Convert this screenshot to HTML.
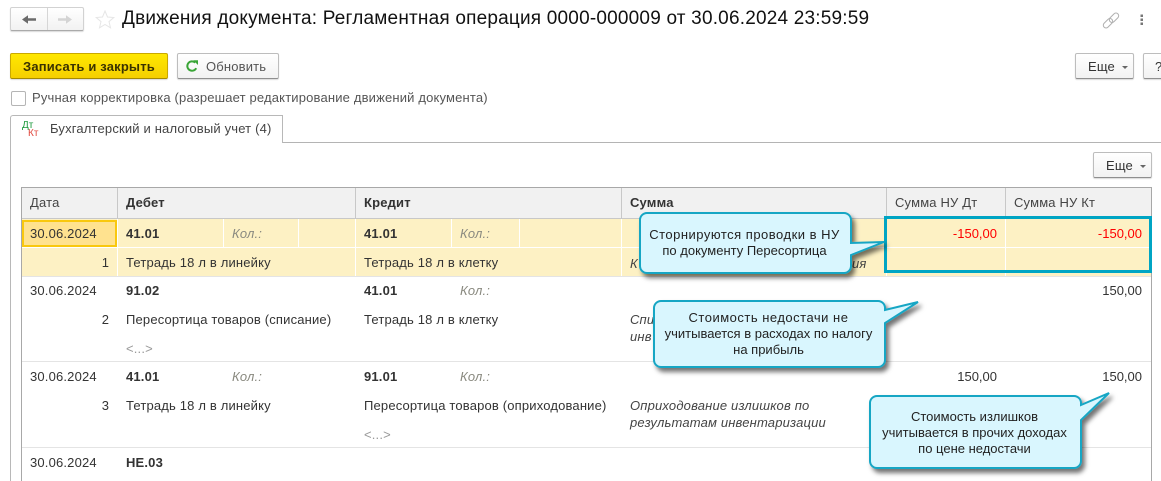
<!DOCTYPE html>
<html lang="ru"><head><meta charset="utf-8"><title>Движения документа</title>
<style>
html,body{margin:0;padding:0;background:#fff;width:1161px;height:481px;overflow:hidden}
body{position:relative;font:13px/14px "Liberation Sans",Arial,sans-serif;letter-spacing:.17px;color:#333}
.a{position:absolute}
.t{position:absolute;white-space:nowrap;line-height:14px}
.b{font-weight:bold}
.k{font-style:italic;color:#8a8a80}
.i{font-style:italic;color:#444}
.r{text-align:right;letter-spacing:0}
.btn{position:absolute;box-sizing:border-box;border:1px solid #bdbdbd;border-bottom-color:#8f8f8f;border-radius:2px;background:linear-gradient(#fff,#f2f2f2);box-shadow:0 1px 1px rgba(0,0,0,.15)}
.c{position:absolute;text-align:center;color:#222;line-height:16px;white-space:nowrap;letter-spacing:0}
</style></head><body>

<!-- nav -->
<div class="btn" style="left:10px;top:7px;width:74px;height:24px;border-color:#d2d2d2;border-bottom-color:#aaa"></div>
<div class="a" style="left:47px;top:8px;width:1px;height:22px;background:#d6d6d6"></div>
<svg class="a" style="left:0;top:0" width="125" height="35">
<path d="M22 19.500l6-4.200v2.900h8v2.600h-8v2.900z" fill="#6b6b6b"/>
<path d="M72 19.500l-6-4.200v2.900h-8v2.600h8v2.900z" fill="#d4d4d4"/>
<path d="M105 11l2.500 6 6.300.5-4.800 4.100 1.500 6.200-5.500-3.300-5.500 3.300 1.500-6.200-4.800-4.100 6.300-.5z" fill="#fff" stroke="#e6e6e6" stroke-width="1"/>
</svg>
<div class="t" style="left:122px;top:8px;font-size:19px;line-height:21px;color:#111;letter-spacing:.2px">Движения документа: Регламентная операция 0000-000009 от 30.06.2024 23:59:59</div>

<!-- top right icons -->
<svg class="a" style="left:1090px;top:5px" width="60" height="30">
<rect x="18.500" y="10" width="11" height="5.500" rx="2.750" transform="rotate(-45 24 12.750)" fill="none" stroke="#b0b0b0" stroke-width="1"/>
<rect x="12.500" y="15.500" width="11" height="5.500" rx="2.750" transform="rotate(-45 18 18.250)" fill="none" stroke="#b0b0b0" stroke-width="1"/>
<rect x="50.500" y="9.500" width="2.500" height="2.500" fill="#777"/><rect x="50.500" y="13.500" width="2.500" height="2.500" fill="#777"/><rect x="50.500" y="17.500" width="2.500" height="2.500" fill="#777"/>
</svg>

<!-- buttons -->
<div class="btn" style="left:10px;top:53px;width:158px;height:26px;background:linear-gradient(#ffe800,#f5cf00);border-color:#c9a800;border-bottom-color:#a58a00"></div>
<div class="t b" style="left:23px;top:60px;color:#3a3200">Записать и закрыть</div>
<div class="btn" style="left:177px;top:53px;width:102px;height:26px"></div>
<svg class="a" style="left:185px;top:59px" width="15" height="15"><path d="M11.200 9.200A4.700 4.700 0 1 1 10.200 3.600" fill="none" stroke="#3aa537" stroke-width="2"/><path d="M8.200 1.200h4.800v4.800z" fill="#3aa537"/></svg>
<div class="t" style="left:206px;top:60px;color:#555">Обновить</div>

<div class="btn" style="left:1075px;top:53px;width:59px;height:26px"></div>
<div class="t" style="left:1088px;top:60px">Еще</div>
<div class="a" style="left:1122px;top:66px;border:3px solid transparent;border-top-color:#666;border-bottom:0"></div>
<div class="btn" style="left:1143px;top:53px;width:30px;height:26px"></div>
<div class="t" style="left:1155px;top:60px">?</div>

<div class="a" style="left:11px;top:91px;width:13px;height:13px;border:1px solid #b5b5b5;border-radius:2px"></div>
<div class="t" style="left:32px;top:91px;color:#555">Ручная корректировка (разрешает редактирование движений документа)</div>

<!-- tab -->
<div class="a" style="left:283px;top:142px;width:878px;height:1px;background:#b4b4b4"></div>
<div class="a" style="left:10px;top:115px;width:272px;height:366px;border:1px solid #b8b8b8;border-width:1px 0 0 1px;border-radius:3px 0 0 0"></div>
<div class="a" style="left:282px;top:116px;width:1px;height:27px;background:#b8b8b8"></div>
<div class="t" style="left:22px;top:121px;font-size:10px;line-height:10px;color:#1c9a3c;letter-spacing:0">Дт</div>
<div class="t" style="left:28px;top:129px;font-size:10px;line-height:10px;color:#e0483e;letter-spacing:0">Кт</div>
<div class="t" style="left:50px;top:122px;color:#444">Бухгалтерский и налоговый учет (4)</div>

<div class="btn" style="left:1093px;top:152px;width:59px;height:26px"></div>
<div class="t" style="left:1106px;top:159px">Еще</div>
<div class="a" style="left:1140px;top:165px;border:3px solid transparent;border-top-color:#666;border-bottom:0"></div>

<!-- table frame -->
<div class="a" style="left:21px;top:187px;width:1131px;height:1px;background:#a8a8a8"></div>
<div class="a" style="left:21px;top:187px;width:1px;height:294px;background:#a8a8a8"></div>
<div class="a" style="left:1151px;top:187px;width:1px;height:294px;background:#a8a8a8"></div>
<div class="a" style="left:22px;top:188px;width:1129px;height:30px;background:#f1f1f1"></div>
<div class="a" style="left:22px;top:218px;width:1129px;height:1px;background:#c8c8c8"></div>
<div class="a" style="left:117px;top:188px;width:1px;height:30px;background:#c8c8c8"></div>
<div class="a" style="left:355px;top:188px;width:1px;height:30px;background:#c8c8c8"></div>
<div class="a" style="left:621px;top:188px;width:1px;height:30px;background:#c8c8c8"></div>
<div class="a" style="left:886px;top:188px;width:1px;height:30px;background:#c8c8c8"></div>
<div class="a" style="left:1005px;top:188px;width:1px;height:30px;background:#c8c8c8"></div>

<div class="t" style="left:30px;top:196px;color:#444">Дата</div>
<div class="t b" style="left:126px;top:196px">Дебет</div>
<div class="t b" style="left:364px;top:196px">Кредит</div>
<div class="t b" style="left:630px;top:196px">Сумма</div>
<div class="t" style="left:895px;top:196px;color:#444">Сумма НУ Дт</div>
<div class="t" style="left:1014px;top:196px;color:#444">Сумма НУ Кт</div>

<!-- row 1 bg -->
<div class="a" style="left:22px;top:219px;width:1129px;height:57px;background:#fdf1c4"></div>
<div class="a" style="left:22px;top:247px;width:1129px;height:1px;background:#fff"></div>
<div class="a" style="left:117px;top:219px;width:1px;height:57px;background:#fff"></div>
<div class="a" style="left:355px;top:219px;width:1px;height:57px;background:#fff"></div>
<div class="a" style="left:621px;top:219px;width:1px;height:57px;background:#fff"></div>
<div class="a" style="left:886px;top:219px;width:1px;height:57px;background:#fff"></div>
<div class="a" style="left:1005px;top:219px;width:1px;height:57px;background:#fff"></div>
<div class="a" style="left:223px;top:219px;width:1px;height:28px;background:#fff"></div>
<div class="a" style="left:298px;top:219px;width:1px;height:28px;background:#fff"></div>
<div class="a" style="left:451px;top:219px;width:1px;height:28px;background:#fff"></div>
<div class="a" style="left:519px;top:219px;width:1px;height:28px;background:#fff"></div>
<div class="a" style="left:22px;top:220px;width:91px;height:23px;background:#ffe28f;border:2px solid #f9c80e"></div>
<div class="a" style="left:22px;top:276px;width:1129px;height:1px;background:#e4e4e4"></div>
<div class="a" style="left:22px;top:361px;width:1129px;height:1px;background:#e4e4e4"></div>
<div class="a" style="left:22px;top:447px;width:1129px;height:1px;background:#e4e4e4"></div>

<!-- row 1 -->
<div class="t" style="left:30px;top:227px">30.06.2024</div>
<div class="t b" style="left:126px;top:227px">41.01</div>
<div class="t k" style="left:232px;top:227px">Кол.:</div>
<div class="t b" style="left:364px;top:227px">41.01</div>
<div class="t k" style="left:460px;top:227px">Кол.:</div>
<div class="t r" style="left:897px;width:100px;top:227px;color:#f00">-150,00</div>
<div class="t r" style="left:1042px;width:100px;top:227px;color:#f00">-150,00</div>
<div class="t r" style="left:60px;width:49px;top:256px">1</div>
<div class="t" style="left:126px;top:256px">Тетрадь 18 л в линейку</div>
<div class="t" style="left:364px;top:256px">Тетрадь 18 л в клетку</div>
<div class="t i" style="left:630px;top:257px">К</div>
<div class="t i" style="left:852px;top:257px">ия</div>

<!-- row 2 -->
<div class="t" style="left:30px;top:284px">30.06.2024</div>
<div class="t b" style="left:126px;top:284px">91.02</div>
<div class="t b" style="left:364px;top:284px">41.01</div>
<div class="t k" style="left:460px;top:284px">Кол.:</div>
<div class="t r" style="left:1042px;width:100px;top:284px">150,00</div>
<div class="t r" style="left:60px;width:49px;top:313px">2</div>
<div class="t" style="left:126px;top:313px">Пересортица товаров (списание)</div>
<div class="t" style="left:364px;top:313px">Тетрадь 18 л в клетку</div>
<div class="t i" style="left:630px;top:313px">Спи</div>
<div class="t i" style="left:630px;top:330px">инв</div>
<div class="t" style="left:126px;top:342px;color:#999">&lt;...&gt;</div>

<!-- row 3 -->
<div class="t" style="left:30px;top:370px">30.06.2024</div>
<div class="t b" style="left:126px;top:370px">41.01</div>
<div class="t k" style="left:232px;top:370px">Кол.:</div>
<div class="t b" style="left:364px;top:370px">91.01</div>
<div class="t k" style="left:460px;top:370px">Кол.:</div>
<div class="t r" style="left:897px;width:100px;top:370px">150,00</div>
<div class="t r" style="left:1042px;width:100px;top:370px">150,00</div>
<div class="t r" style="left:60px;width:49px;top:399px">3</div>
<div class="t" style="left:126px;top:399px">Тетрадь 18 л в линейку</div>
<div class="t" style="left:364px;top:399px">Пересортица товаров (оприходование)</div>
<div class="t i" style="left:630px;top:399px">Оприходование излишков по</div>
<div class="t i" style="left:630px;top:416px">результатам инвентаризации</div>
<div class="t" style="left:364px;top:428px;color:#999">&lt;...&gt;</div>

<!-- row 4 -->
<div class="t" style="left:30px;top:456px">30.06.2024</div>
<div class="t b" style="left:126px;top:456px">НЕ.03</div>

<!-- highlight -->
<div class="a" style="left:884px;top:216px;width:262px;height:51px;border:3px solid #00a5c4"></div>

<!-- callouts -->
<svg class="a" style="left:0;top:0" width="1161" height="481">
<defs><filter id="s" x="-10%" y="-10%" width="125%" height="130%"><feDropShadow dx="3" dy="4" stdDeviation="2.500" flood-color="#000" flood-opacity=".55"/></filter></defs>
<g fill="#d9f6fe" stroke="#16a6c4" stroke-width="2" filter="url(#s)">
<path d="M647 213H844a7 7 0 0 1 7 7V243L884 242 851 255V266a7 7 0 0 1-7 7H647a7 7 0 0 1-7-7V220a7 7 0 0 1 7-7z"/>
<path d="M661 301H878a7 7 0 0 1 7 7V310L918 302 885 323V360a7 7 0 0 1-7 7H661a7 7 0 0 1-7-7V308a7 7 0 0 1 7-7z"/>
<path d="M877 396H1074a7 7 0 0 1 7 7V405L1109 393 1081 420V461a7 7 0 0 1-7 7H877a7 7 0 0 1-7-7V403a7 7 0 0 1 7-7z"/>
</g>
</svg>
<div class="c" style="left:639px;width:211px;top:227px"><span style="letter-spacing:.5px">Сторнируются проводки в НУ</span><br>по документу Пересортица</div>
<div class="c" style="left:653px;width:231px;top:310px"><span style="letter-spacing:.5px">Стоимость недостачи не</span><br>учитывается в расходах по налогу<br>на прибыль</div>
<div class="c" style="left:869px;width:211px;top:409px">Стоимость излишков<br>учитывается в прочих доходах<br>по цене недостачи</div>
</body></html>
